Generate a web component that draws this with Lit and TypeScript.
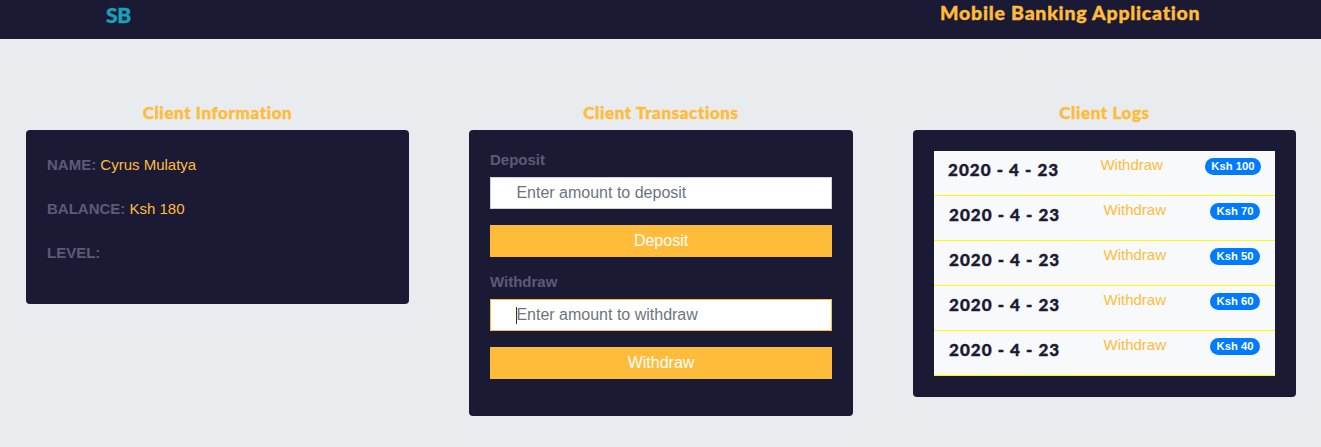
import { LitElement, html, css } from "lit";
import { customElement, state } from "lit/decorators.js";

interface LogEntry {
  date: string;
  type: string;
  amount: number;
}

@customElement("app-root")
export class AppRoot extends LitElement {
  static styles = css`
    :host {
      display: block;
      height: 447px;
      overflow: hidden;
      background: #e8ecef;
      color: #1b1a35;
      font: 15px/22px "Liberation Sans", Arial, sans-serif;
    }
    * {
      box-sizing: border-box;
    }
    .bar {
      display: flex;
      justify-content: space-between;
      align-items: flex-start;
      height: 39px;
      padding: 0 121px 0 106px;
      background: #1b1a35;
    }
    .brand,
    .title,
    h2,
    .date {
      font-family: Lato, sans-serif;
      font-weight: 900;
      font-variant-ligatures: none;
      -webkit-text-stroke: 0.4px currentColor;
      white-space: nowrap;
    }
    .brand {
      padding-top: 2px;
      font-size: 21px;
      line-height: 26px;
      letter-spacing: -0.4px;
      color: #17a2b8;
    }
    .title {
      width: 260px;
      font-size: 19.5px;
      line-height: 26px;
      letter-spacing: 0.76px;
      color: #ffbc3b;
    }
    main {
      display: grid;
      grid-template-columns: 383px 384px 383px;
      column-gap: 60px;
      align-items: start;
      padding: 62px 25px 0 26px;
    }
    h2 {
      margin: 0;
      height: 29px;
      padding-top: 1px;
      font-size: 17px;
      line-height: 22px;
      letter-spacing: 0.6px;
      text-align: center;
      color: #ffbc3b;
    }
    .card {
      padding: 21px;
      border-radius: 4px;
      background: #1b1a35;
    }
    .info {
      height: 174px;
      padding-top: 24px;
    }
    .info p {
      margin: 0 0 22px;
    }
    .info b,
    label {
      color: #5c5a78;
      font-weight: 700;
    }
    .info span {
      color: #ffbc3b;
    }
    .forms {
      height: 286px;
      padding-top: 19px;
    }
    label {
      display: block;
      height: 28px;
    }
    input,
    button {
      display: block;
      width: 100%;
      height: 32px;
      margin: 0 0 16px;
      border-radius: 0;
      font: 16px/24px "Liberation Sans", Arial, sans-serif;
    }
    input {
      padding: 0 25.4px;
      border: 1px solid #ced4da;
      background: #fff;
      outline: none;
    }
    input::placeholder {
      color: #6c757d;
      opacity: 1;
    }
    .field {
      position: relative;
    }
    .field.active input {
      border-color: #ffbc3b;
    }
    .caret {
      position: absolute;
      left: 26px;
      top: 8px;
      width: 1px;
      height: 17px;
      background: #30343a;
    }
    button {
      padding: 0;
      border: 0;
      background: #ffbc3b;
      color: #fff;
    }
    .forms button {
      margin-bottom: 14px;
    }
    .logs {
      height: 267px;
    }
    .row {
      display: flex;
      justify-content: space-between;
      align-items: flex-start;
      height: 45px;
      padding: 3px 15px 0;
      border-bottom: 1px solid #ff0;
      background: #f8f9fb;
    }
    .row:first-child {
      padding-left: 14px;
      padding-right: 14px;
    }
    .date {
      width: 110.5px;
      padding-top: 5px;
      font-size: 17px;
      line-height: 22px;
      letter-spacing: 1.03px;
    }
    .type {
      color: #ffbc3b;
    }
    .badge {
      height: 17px;
      margin-top: 4px;
      padding: 0 6.5px;
      border-radius: 9px;
      background: #007bff;
      color: #fff;
      font-size: 11.25px;
      font-weight: 700;
      line-height: 17px;
      white-space: nowrap;
    }
  `;

  @state() private logs: LogEntry[] = [100, 70, 50, 60, 40].map((amount) => ({
    date: "2020 - 4 - 23",
    type: "Withdraw",
    amount,
  }));

  render() {
    return html`
      <header class="bar">
        <div class="brand">SB</div>
        <div class="title">Mobile Banking Application</div>
      </header>
      <main>
        <section>
          <h2>Client Information</h2>
          <div class="card info">
            <p><b>NAME:</b> <span>Cyrus Mulatya</span></p>
            <p><b>BALANCE:</b> <span>Ksh 180</span></p>
            <p><b>LEVEL:</b></p>
          </div>
        </section>
        <section>
          <h2>Client Transactions</h2>
          <div class="card forms">
            <label for="deposit">Deposit</label>
            <div class="field">
              <input id="deposit" placeholder="Enter amount to deposit" />
            </div>
            <button>Deposit</button>
            <label for="withdraw">Withdraw</label>
            <div class="field active">
              <input id="withdraw" placeholder="Enter amount to withdraw" />
              <i class="caret"></i>
            </div>
            <button>Withdraw</button>
          </div>
        </section>
        <section>
          <h2>Client Logs</h2>
          <div class="card logs">
            ${this.logs.map(
              (log) => html`<div class="row">
                <span class="date">${log.date}</span>
                <span class="type">${log.type}</span>
                <span class="badge">Ksh ${log.amount}</span>
              </div>`
            )}
          </div>
        </section>
      </main>
    `;
  }
}
